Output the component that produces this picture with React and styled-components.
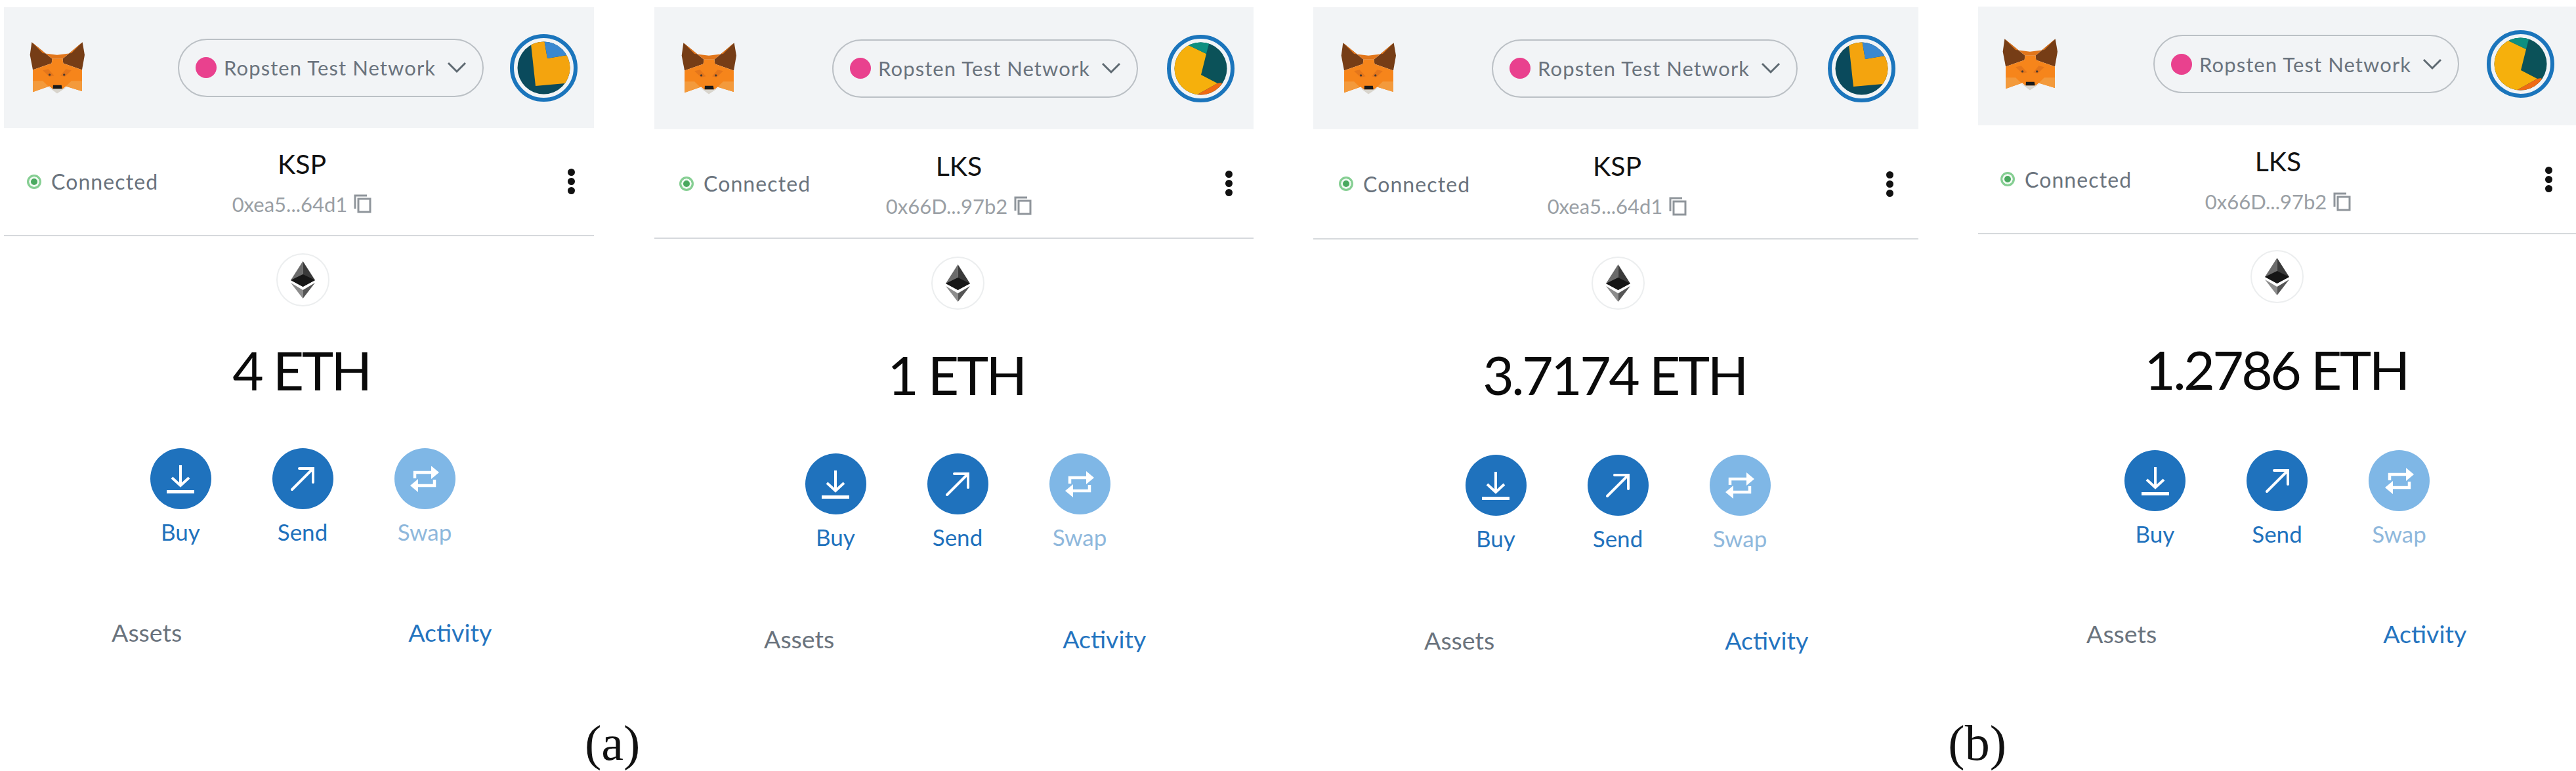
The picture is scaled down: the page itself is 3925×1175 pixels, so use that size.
import styled, { createGlobalStyle } from 'styled-components';

const GlobalStyle = createGlobalStyle`
    html, body {
        margin: 0;
        padding: 0;
        background: #fff;
    }
    body {
        font-family: 'Lato', 'Liberation Sans', sans-serif;
    }
`;

// each screenshot was pasted by hand, so every panel is off by a few px
const panels = [
    {
        id: 1, name: 'KSP', address: '0xea5...64d1', balance: '4 ETH', avatar: 'a',
        left: 6, width: 899, top: 11, headerH: 184, headerPad: 0, foxPad: 39, pillGap: 142, avatarGap: 40,
        infoH: 165, infoLeft: 35, infoRight: 29, statusW: 312,
        mainPad: 11, ethGap: 26, balanceGap: 54, balanceNudge: 4, actionsGap: 77, tabsGap: 112, tabsLeft: 164, tabGap: 345,
    },
    {
        id: 2, name: 'LKS', address: '0x66D...97b2', balance: '1 ETH', avatar: 'b',
        left: 92, width: 913, top: 11, headerH: 186, headerPad: 0, foxPad: 41, pillGap: 146, avatarGap: 44,
        infoH: 167, infoLeft: 38, infoRight: 32, statusW: 319,
        mainPad: 11, ethGap: 27, balanceGap: 56, balanceNudge: 4, actionsGap: 78, tabsGap: 114, tabsLeft: 167, tabGap: 348,
    },
    {
        id: 3, name: 'KSP', address: '0xea5...64d1', balance: '3.7174 ETH', avatar: 'a',
        left: 91, width: 922, top: 11, headerH: 186, headerPad: 0, foxPad: 42, pillGap: 146, avatarGap: 46,
        infoH: 168, infoLeft: 39, infoRight: 38, statusW: 317,
        mainPad: 6, ethGap: 26, balanceGap: 56, balanceNudge: 10, actionsGap: 80, tabsGap: 114, tabsLeft: 169, tabGap: 351,
    },
    {
        id: 4, name: 'LKS', address: '0x66D...97b2', balance: '1.2786 ETH', avatar: 'b',
        left: 91, width: 911, top: 10, headerH: 181, headerPad: 6, foxPad: 37, pillGap: 146, avatarGap: 42,
        infoH: 166, infoLeft: 34, infoRight: 36, statusW: 316,
        mainPad: 0, ethGap: 24, balanceGap: 58, balanceNudge: 3, actionsGap: 81, tabsGap: 111, tabsLeft: 165, tabGap: 345,
    },
];

const FoxLogo = () => (
    <FoxSvg viewBox="0 0 250 235">
        <polygon points="10,2 103,78 100,98 15,128 2,60" fill="#763d16" />
        <polygon points="240,2 150,78 153,98 238,128 250,60" fill="#763d16" />
        <polygon points="10,2 103,78 150,78 240,2 190,52 125,60 60,52" fill="#e2761b" />
        <polygon points="15,128 100,98 103,78 150,78 153,98 238,128 238,225 165,202 150,215 105,215 90,202 15,228" fill="#f6851b" />
        <polygon points="60,130 85,124 112,154 90,159" fill="#e4761b" />
        <polygon points="190,130 165,124 140,154 160,159" fill="#e4761b" />
        <polygon points="15,178 60,178 85,202 15,228" fill="#f39a3c" />
        <polygon points="238,178 190,178 165,202 238,225" fill="#f39a3c" />
        <circle cx="91" cy="150" r="5" fill="#4a3a30" />
        <circle cx="157" cy="150" r="5" fill="#4a3a30" />
        <polygon points="107,197 145,197 148,214 106,214" fill="#1a1a1a" />
        <polygon points="85,205 106,214 148,214 170,205 125,235" fill="#d8d4cc" />
    </FoxSvg>
);

const AvatarA = ({ clip }) => (
    <AvatarSvg viewBox="0 0 103 103">
        <defs>
            <clipPath id={clip}>
                <circle cx="51.5" cy="51.5" r="40" />
            </clipPath>
        </defs>
        <circle cx="51.5" cy="51.5" r="48.5" fill="none" stroke="#1b75bc" strokeWidth="6" />
        <g clipPath={`url(#${clip})`}>
            <rect width="103" height="103" fill="#0a4a5c" />
            <polygon points="32,15 52,8 57,37 87,32 100,55 84,75 39,79" fill="#f4a40e" />
            <polygon points="52,8 57,37 87,32 76,6" fill="#3a88d0" />
        </g>
    </AvatarSvg>
);

const AvatarB = ({ clip }) => (
    <AvatarSvg viewBox="0 0 103 103">
        <defs>
            <clipPath id={clip}>
                <circle cx="51.5" cy="51.5" r="40" />
            </clipPath>
        </defs>
        <circle cx="51.5" cy="51.5" r="48.5" fill="none" stroke="#1b75bc" strokeWidth="6" />
        <g clipPath={`url(#${clip})`}>
            <rect width="103" height="103" fill="#0b5259" />
            <polygon points="33,16 60,29 52,61 77,74 43,93 0,103 0,16" fill="#f6b00c" />
            <polygon points="43,93 77,74 83,73 92,90 63,103" fill="#ef6a14" />
            <polygon points="33,16 60,29 65,10 45,4" fill="#0d8f80" />
        </g>
    </AvatarSvg>
);

const CopyIcon = () => (
    <svg width="27" height="29" viewBox="0 0 27 29" fill="none" stroke="#8f959b" strokeWidth="3">
        <path d="M2 22V2h18" />
        <rect x="7" y="7" width="18" height="20" />
    </svg>
);

const Chevron = () => (
    <svg width="30" height="18" viewBox="0 0 30 18" fill="none" stroke="#5f6a72" strokeWidth="3">
        <path d="M2 2l13 13L28 2" />
    </svg>
);

const EthGlyph = () => (
    <svg width="37" height="57" viewBox="0 0 37 57">
        <polygon points="18.5,0 0,29 18.5,39" fill="#6b6b6b" />
        <polygon points="18.5,0 37,29 18.5,39" fill="#3a3a3a" />
        <polygon points="18.5,20 0,29 18.5,39 37,29" fill="#161616" />
        <polygon points="0,33 18.5,44 18.5,57" fill="#8c8c8c" />
        <polygon points="37,33 18.5,44 18.5,57" fill="#555" />
    </svg>
);

const BuyIcon = () => (
    <svg width="44" height="44" viewBox="0 0 44 44" fill="none" stroke="#fff" strokeWidth="4">
        <path d="M22 1v30M9 20l13 12 13-12" />
        <path d="M1 41.5h42" strokeWidth="5" />
    </svg>
);

const SendIcon = () => (
    <svg width="38" height="38" viewBox="0 0 38 38" fill="none" stroke="#fff" strokeWidth="4" strokeLinecap="round">
        <path d="M3 35L34 4M14 3h21v21" />
    </svg>
);

const SwapIcon = () => (
    <svg width="44" height="42" viewBox="0 0 44 42" fill="none">
        <path d="M7 20V11h26M37 22v9H11" stroke="#fff" strokeWidth="4.5" />
        <polygon points="32,1 44,11 32,21" fill="#fff" />
        <polygon points="12,21 0,31 12,41" fill="#fff" />
    </svg>
);

const actions = [
    { label: 'Buy', Icon: BuyIcon },
    { label: 'Send', Icon: SendIcon },
    { label: 'Swap', Icon: SwapIcon, faded: true },
];

const App = () => (
    <Page>
        <GlobalStyle />
        <PanelRow>
            {panels.map((p) => (
                <Panel key={p.id} $left={p.left} $width={p.width} $top={p.top}>
                    <Header $height={p.headerH} $pad={p.headerPad} $foxPad={p.foxPad}>
                        <FoxLogo />
                        <NetworkPill $gap={p.pillGap}>
                            <NetworkDot />
                            <NetworkName>Ropsten Test Network</NetworkName>
                            <Chevron />
                        </NetworkPill>
                        <AvatarSlot $gap={p.avatarGap}>
                            {p.avatar === 'a' ? <AvatarA clip={`clip-${p.id}`} /> : <AvatarB clip={`clip-${p.id}`} />}
                        </AvatarSlot>
                    </Header>
                    <Info $height={p.infoH} $left={p.infoLeft} $right={p.infoRight}>
                        <Status $width={p.statusW}>
                            <StatusDot />
                            <StatusText>Connected</StatusText>
                        </Status>
                        <Account>
                            <AccountName>{p.name}</AccountName>
                            <Address>
                                {p.address}
                                <CopyIcon />
                            </Address>
                        </Account>
                        <Menu>
                            <MenuDot />
                            <MenuDot />
                            <MenuDot />
                        </Menu>
                    </Info>
                    <Main $pad={p.mainPad}>
                        <TokenBadge $gap={p.ethGap}>
                            <EthGlyph />
                        </TokenBadge>
                        <Balance $gap={p.balanceGap} $nudge={p.balanceNudge}>{p.balance}</Balance>
                        <Actions $gap={p.actionsGap}>
                            {actions.map(({ label, Icon, faded }) => (
                                <Action key={label}>
                                    <ActionCircle $faded={faded}>
                                        <Icon />
                                    </ActionCircle>
                                    <ActionLabel $faded={faded}>{label}</ActionLabel>
                                </Action>
                            ))}
                        </Actions>
                    </Main>
                    <Tabs $top={p.tabsGap} $left={p.tabsLeft} $gap={p.tabGap}>
                        <Tab>Assets</Tab>
                        <Tab $active>Activity</Tab>
                    </Tabs>
                </Panel>
            ))}
        </PanelRow>
        <Captions>
            <Caption>(a)</Caption>
            <Caption>(b)</Caption>
        </Captions>
    </Page>
);

const Page = styled.div`
    width: 3925px;
    height: 1175px;
    overflow: hidden;
    background: #fff;
`;

const PanelRow = styled.div`
    display: flex;
    align-items: flex-start;
    height: 1092px;
`;

const Panel = styled.section`
    flex: none;
    width: ${(p) => p.$width}px;
    margin-left: ${(p) => p.$left}px;
    margin-top: ${(p) => p.$top}px;
`;

const Header = styled.header`
    display: flex;
    align-items: center;
    box-sizing: border-box;
    height: ${(p) => p.$height}px;
    padding: 0 0 ${(p) => p.$pad}px ${(p) => p.$foxPad}px;
    background: #f2f4f6;
`;

const FoxSvg = styled.svg`
    flex: none;
    width: 84px;
    height: 80px;
`;

const NetworkPill = styled.div`
    flex: none;
    display: flex;
    align-items: center;
    box-sizing: border-box;
    width: 466px;
    height: 89px;
    margin-left: ${(p) => p.$gap}px;
    padding-left: 25px;
    border: 2px solid #bbc0c5;
    border-radius: 45px;
`;

const NetworkDot = styled.span`
    flex: none;
    width: 32px;
    height: 32px;
    border-radius: 50%;
    background: #e9418e;
`;

const NetworkName = styled.span`
    flex: none;
    width: 323px;
    margin: 0 17px 0 11px;
    font-size: 31px;
    letter-spacing: 1.1px;
    color: #6a737d;
    white-space: nowrap;
`;

const AvatarSlot = styled.div`
    flex: none;
    display: flex;
    margin-left: ${(p) => p.$gap}px;
`;

const AvatarSvg = styled.svg`
    width: 103px;
    height: 103px;
`;

const Info = styled.div`
    display: flex;
    align-items: center;
    box-sizing: border-box;
    height: ${(p) => p.$height}px;
    padding: 0 ${(p) => p.$right}px 0 ${(p) => p.$left}px;
    border-bottom: 2px solid #d6d9dc;
`;

const Status = styled.div`
    flex: none;
    display: flex;
    align-items: center;
    width: ${(p) => p.$width}px;
`;

const StatusDot = styled.span`
    flex: none;
    box-sizing: border-box;
    width: 22px;
    height: 22px;
    border: 3px solid #86cf93;
    border-radius: 50%;
    background: #4aa95f;
    box-shadow: inset 0 0 0 3px #f1faf2;
`;

const StatusText = styled.span`
    margin-left: 15px;
    font-size: 32px;
    letter-spacing: 1.1px;
    color: #6a737d;
`;

const Account = styled.div`
    flex: none;
    display: flex;
    flex-direction: column;
    align-items: center;
    width: 214px;
`;

const AccountName = styled.div`
    font-size: 41px;
    line-height: 50px;
    color: #111;
`;

const Address = styled.div`
    display: flex;
    align-items: center;
    gap: 10px;
    margin-top: 18px;
    font-size: 31px;
    line-height: 36px;
    color: #9a9fa5;
    white-space: nowrap;
`;

const Menu = styled.div`
    display: flex;
    flex-direction: column;
    gap: 3px;
    margin-left: auto;
`;

const MenuDot = styled.span`
    width: 11px;
    height: 11px;
    border-radius: 50%;
    background: #111;
`;

const Main = styled.div`
    display: flex;
    flex-direction: column;
    align-items: center;
    padding-left: ${(p) => p.$pad}px;
`;

const TokenBadge = styled.div`
    display: flex;
    align-items: center;
    justify-content: center;
    box-sizing: border-box;
    width: 81px;
    height: 81px;
    margin-top: ${(p) => p.$gap}px;
    border: 2px solid #eceeef;
    border-radius: 50%;
`;

const Balance = styled.div`
    margin-top: ${(p) => p.$gap}px;
    margin-right: ${(p) => p.$nudge}px;
    font-size: 82px;
    line-height: 85px;
    letter-spacing: -3.5px;
    color: #0a0a0a;
`;

const Actions = styled.div`
    display: flex;
    margin-top: ${(p) => p.$gap}px;
`;

const Action = styled.div`
    display: flex;
    flex-direction: column;
    align-items: center;
    width: 186px;
`;

const ActionCircle = styled.div`
    display: flex;
    align-items: center;
    justify-content: center;
    width: 93px;
    height: 93px;
    border-radius: 50%;
    background: ${(p) => (p.$faded ? '#7fb7e6' : '#1f72bd')};
`;

const ActionLabel = styled.div`
    margin-top: 14px;
    font-size: 35px;
    line-height: 40px;
    color: ${(p) => (p.$faded ? '#8fb8dc' : '#1f72bd')};
`;

const Tabs = styled.div`
    display: flex;
    gap: ${(p) => p.$gap}px;
    margin-top: ${(p) => p.$top}px;
    padding-left: ${(p) => p.$left}px;
`;

const Tab = styled.div`
    font-size: 37.5px;
    line-height: 44px;
    color: ${(p) => (p.$active ? '#2474bf' : '#6a737d')};
`;

const Captions = styled.div`
    display: flex;
    gap: 1993px;
    padding-left: 891px;
`;

const Caption = styled.div`
    font-family: 'Liberation Serif', 'Times New Roman', serif;
    font-size: 76px;
    line-height: 80px;
    color: #111;
`;

export default App;
